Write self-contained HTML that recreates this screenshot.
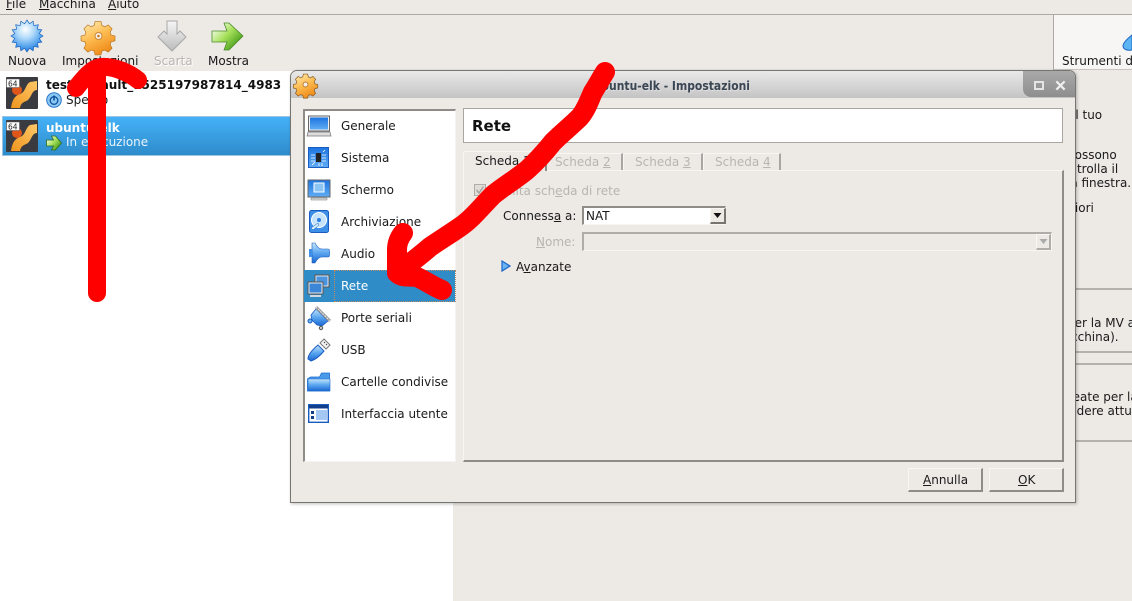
<!DOCTYPE html>
<html><head><meta charset="utf-8">
<style>
html,body{margin:0;padding:0}
body{width:1132px;height:601px;overflow:hidden;position:relative;background:#edeae6;font:12px "DejaVu Sans",sans-serif;color:#1a1a1a}
.t{position:absolute;white-space:nowrap;line-height:14px}
.a{position:absolute}
u{text-decoration:underline}
.g{color:#b8b5b1}
svg{position:absolute;overflow:visible}
</style></head><body>

<svg style="left:0;top:0" width="0" height="0"><defs>
<radialGradient id="n" cx=".45" cy=".3" r=".75"><stop offset="0" stop-color="#fff"/><stop offset=".35" stop-color="#b4dcfb"/><stop offset=".75" stop-color="#4a9cea"/><stop offset="1" stop-color="#1668d0"/></radialGradient>
<linearGradient id="o" x1=".1" y1="0" x2=".6" y2="1"><stop offset="0" stop-color="#ffedb4"/><stop offset=".5" stop-color="#fdbb50"/><stop offset="1" stop-color="#ee8a18"/></linearGradient>
<linearGradient id="s" x1="0" y1="0" x2="0" y2="1"><stop offset="0" stop-color="#f6f6f6"/><stop offset="1" stop-color="#bcbcbc"/></linearGradient>
<linearGradient id="gr" x1="0" y1=".2" x2=".9" y2=".95"><stop offset="0" stop-color="#f6fcf0"/><stop offset=".45" stop-color="#a6e05a"/><stop offset="1" stop-color="#2f8c0a"/></linearGradient>
<linearGradient id="b" x1="0" y1="0" x2="0" y2="1"><stop offset="0" stop-color="#c4e4fb"/><stop offset=".5" stop-color="#5aa6f0"/><stop offset="1" stop-color="#1a66d0"/></linearGradient>
<linearGradient id="bd" x1="0" y1="0" x2="0" y2="1"><stop offset="0" stop-color="#1c74e0"/><stop offset="1" stop-color="#60acf4"/></linearGradient>
<linearGradient id="vm" x1="0" y1="1" x2="1" y2="0"><stop offset="0" stop-color="#f0951e"/><stop offset="1" stop-color="#ffc868"/></linearGradient>
</defs></svg>

<!-- menu -->
<div class="a" style="left:0;top:14px;width:1132px;height:1px;background:#aca9a4"></div>
<div class="t" style="left:6px;top:-3px"><u>F</u>ile</div>
<div class="t" style="left:39px;top:-3px"><u>M</u>acchina</div>
<div class="t" style="left:108px;top:-3px"><u>A</u>iuto</div>

<!-- toolbar icons -->
<svg style="left:11px;top:20px" width="32" height="32" viewBox="-16 -16 32 32"><polygon points="16,0 12.26,2.44 14.8,6.1 10.39,6.94 11.3,11.3 6.94,10.39 6.1,14.8 2.44,12.26 0,16 -2.44,12.26 -6.1,14.8 -6.94,10.39 -11.3,11.3 -10.39,6.94 -14.8,6.1 -12.26,2.44 -16,0 -12.26,-2.44 -14.8,-6.1 -10.39,-6.94 -11.3,-11.3 -6.94,-10.39 -6.1,-14.8 -2.44,-12.26 0,-16 2.44,-12.26 6.1,-14.8 6.94,-10.39 11.3,-11.3 10.39,-6.94 14.8,-6.1 12.26,-2.44" fill="url(#n)" stroke="#1c66c0" stroke-width=".7"/></svg>
<svg style="left:83px;top:20px" width="32" height="32" viewBox="0 0 32 32"><path d="M13 1h6l1 4 3 1.500 3.500-2 4 4-2 3.500 1 3 4 1v5l-4 1-1 3 2 3.500-4 4-3.500-2-3 1-1 4h-6l-1-4-3-1-3.500 2-4-4 2-3.500-1-3-4-1v-5l4-1 1-3-2-3.500 4-4 3.500 2 3-1.500z" transform="translate(-.5 .5) scale(.97)" fill="url(#o)" stroke="#b87420" stroke-width=".7"/><circle cx="15.500" cy="16" r="3.500" fill="#f3efe8" stroke="#c98a3a"/><circle cx="15.500" cy="16" r="1.300" fill="#cc7a20"/></svg>
<svg style="left:157px;top:20px" width="30" height="32" viewBox="0 0 30 32"><path d="M10 1h10v13l3-3 6 6-14 14L1 17l6-6 3 3z" fill="url(#s)" stroke="#a8a8a8"/></svg>
<svg style="left:211px;top:21px" width="33" height="30" viewBox="0 0 33 30"><path d="M1 10h15l-3-8h5l14 13-14 14h-5l3-8H1z" fill="url(#gr)" stroke="#4c8a2a" stroke-width=".8"/></svg>

<div class="t" style="left:8px;top:54px">Nuova</div>
<div class="t" style="left:62px;top:54px">Impostazioni</div>
<div class="t g" style="left:154px;top:54px;text-shadow:1px 1px 0 #fff">Scarta</div>
<div class="t" style="left:208px;top:54px">Mostra</div>

<!-- VM list -->
<div class="a" style="left:0;top:71px;width:453px;height:530px;background:#fff"></div>
<div class="a" style="left:2px;top:116px;width:451px;height:38px;background:linear-gradient(#45b1f7,#2e8ccb);border:1px solid #9cc3df;border-right:0"></div>

<svg style="left:6px;top:77px" width="32" height="32" viewBox="0 0 32 32"><rect width="32" height="32" rx="1" fill="#3a3b40"/><path d="M5 31C6 24 8 19 14 17 20 15 19 8 24 5L31 4V13C26 13 26 19 22 23 19 25 15 25 14 31Z" fill="url(#vm)"/><circle cx="11" cy="13" r="5" fill="#e0561a"/><rect x="0.500" y="2" width="13" height="8.500" fill="#fff" stroke="#555" stroke-width=".5"/><text x="2" y="9.300" font-family="DejaVu Sans" font-size="7.500" fill="#222">64</text></svg>
<svg style="left:6px;top:120px" width="32" height="32" viewBox="0 0 32 32"><rect width="32" height="32" rx="1" fill="#3a3b40"/><path d="M5 31C6 24 8 19 14 17 20 15 19 8 24 5L31 4V13C26 13 26 19 22 23 19 25 15 25 14 31Z" fill="url(#vm)"/><circle cx="11" cy="13" r="5" fill="#e0561a"/><rect x="0.500" y="2" width="13" height="8.500" fill="#fff" stroke="#555" stroke-width=".5"/><text x="2" y="9.300" font-family="DejaVu Sans" font-size="7.500" fill="#222">64</text></svg>

<div class="t" style="left:46px;top:78px;font-weight:bold;color:#111">test_default_1525197987814_4983</div>
<svg style="left:46px;top:92px" width="16" height="16" viewBox="0 0 16 16"><circle cx="8" cy="8" r="7.300" fill="#8cc8f4" stroke="#2a78c8"/><circle cx="8" cy="8.500" r="3.800" fill="none" stroke="#0d4f9a" stroke-width="1.300"/><path d="M8 3.500v5" stroke="#0d4f9a" stroke-width="1.500"/></svg>
<div class="t" style="left:66px;top:93px">Spento</div>
<div class="t" style="left:46px;top:121px;font-weight:bold;color:#fff">ubuntu-elk</div>
<svg style="left:46px;top:135px" width="16" height="16" viewBox="0 0 16 16"><path d="M.5 5h7l-2-4h4l6 7-6 7h-4l2-4h-7z" fill="url(#gr)" stroke="#2c6a20" stroke-width=".8"/></svg>
<div class="t" style="left:66px;top:135px;color:#e8f4fc">In esecuzione</div>

<!-- right side -->
<div class="a" style="left:1053px;top:15px;width:79px;height:54px;background:#f7f6f4;border-left:1px solid #aca9a4;border-bottom:1px solid #c8c5c0"></div>
<svg style="left:1122px;top:34px" width="10" height="18" viewBox="0 0 10 18"><path d="M10 1C5 5 1 9 1 12c0 3 4 5 9 4z" fill="#5db4f4" stroke="#1c66c0"/></svg>
<div class="t" style="left:1062px;top:54px">Strumenti di</div>
<div class="t" style="left:1072px;top:108px">il tuo</div>
<div class="t" style="left:1067px;top:148px">possono</div>
<div class="t" style="left:1062px;top:162px">ontrolla il</div>
<div class="t" style="left:1067px;top:176px">la finestra.</div>
<div class="t" style="left:1070px;top:201px">riori</div>
<div class="t" style="left:1067px;top:316px">per la MV a</div>
<div class="t" style="left:1071px;top:330px">cchina).</div>
<div class="t" style="left:1068px;top:390px">reate per la</div>
<div class="t" style="left:1069px;top:404px">ndere attu</div>
<div class="a" style="left:1076px;top:288px;width:56px;height:2px;background:#b5b2ad"></div>
<div class="a" style="left:1076px;top:351px;width:56px;height:2px;background:#b5b2ad"></div>
<div class="a" style="left:1076px;top:363px;width:56px;height:2px;background:#b5b2ad"></div>
<div class="a" style="left:1076px;top:440px;width:56px;height:2px;background:#b5b2ad"></div>

<!-- dialog -->
<div class="a" style="left:290px;top:70px;width:786px;height:433px;background:#edeae6;border:1px solid #77756f;border-radius:7px 7px 0 0;box-sizing:border-box;box-shadow:1px 1px 3px rgba(0,0,0,.25)"></div>
<div class="a" style="left:291px;top:71px;width:784px;height:27px;background:linear-gradient(#e9e9e9,#c4c4c4);border-radius:6px 6px 0 0"></div>
<div class="a" style="left:1023px;top:71px;width:52px;height:26px;background:linear-gradient(#a9a9a9,#8e8e8e);border-radius:0 6px 0 8px"></div>
<div class="a" style="left:1034px;top:81px;width:6px;height:5px;border:2px solid #e4e4e4"></div>
<svg style="left:1055px;top:80px" width="11" height="11" viewBox="0 0 12 12"><path d="M1.500 1.500l9 9M10.500 1.500l-9 9" stroke="#f0f0f0" stroke-width="2.400"/></svg>
<svg style="left:294px;top:73px" width="23" height="23" viewBox="0 0 32 32"><path d="M13 1h6l1 4 3 1.500 3.500-2 4 4-2 3.500 1 3 4 1v5l-4 1-1 3 2 3.500-4 4-3.500-2-3 1-1 4h-6l-1-4-3-1-3.500 2-4-4 2-3.500-1-3-4-1v-5l4-1 1-3-2-3.500 4-4 3.500 2 3-1.500z" transform="translate(.5 .5) scale(.97)" fill="url(#o)" stroke="#8a5a20"/><circle cx="16" cy="16" r="3.500" fill="#f3efe8" stroke="#a8641a"/></svg>
<div class="t" style="right:382px;top:79px;color:#3a4654;font-family:'DejaVu Sans Condensed','DejaVu Sans',sans-serif;font-stretch:condensed;font-weight:bold;text-shadow:1px 1px 0 #ddd">ubuntu-elk - Impostazioni</div>

<!-- side list -->
<div class="a" style="left:303px;top:109px;width:153px;height:353px;background:#fff;box-sizing:border-box;border:1px solid #f5f4f2;border-top:2px solid #8f8c87;border-left:2px solid #8f8c87"></div>
<div class="a" style="left:304px;top:270px;width:151px;height:32px;background:#308cc6"></div>
<div class="a" style="left:334px;top:270px;width:120px;height:30px;border:1px dotted #c08a60"></div>

<svg style="left:307px;top:115px" width="24" height="22" viewBox="0 0 24 22"><rect x="1.500" y="1" width="21" height="15" fill="#f0f0f0" stroke="#666"/><rect x="3" y="2.500" width="18" height="12" fill="url(#bd)"/><path d="M1 17h22l1 4H0z" fill="#ddd" stroke="#777" stroke-width=".7"/></svg>
<svg style="left:308px;top:147px" width="21" height="21" viewBox="0 0 21 21"><rect x=".5" y=".5" width="20" height="20" fill="url(#bd)" stroke="#1a5cc0"/><rect x="8" y="6" width="5" height="9" fill="#222"/><path d="M3 8h4M3 11h4M3 14h4M14 8h4M14 11h4M14 14h4M4 18l3-3M11 16v3M14 16v3M15 5l2-2" stroke="#fff" stroke-width=".8"/></svg>
<svg style="left:307px;top:179px" width="24" height="22" viewBox="0 0 24 22"><rect x="1" y="1" width="22" height="17" fill="url(#bd)" stroke="#666"/><rect x="7" y="4" width="10" height="9" fill="#8cc4f4" stroke="#fff"/><path d="M4 19h16v2H4z" fill="#ddd" stroke="#777" stroke-width=".5"/></svg>
<svg style="left:309px;top:210px" width="21" height="23" viewBox="0 0 21 23"><rect x=".5" y=".5" width="19" height="22" rx="2" fill="#3d8fe8" stroke="#1a5cc0"/><circle cx="10" cy="10" r="7.500" fill="#c8e4fa" stroke="#fff"/><circle cx="10" cy="10" r="2" fill="#2d7fe0"/><path d="M2 18l7-5 1 2-6 5z" fill="#d8eefc" stroke="#1a5cc0" stroke-width=".5"/></svg>
<svg style="left:309px;top:242px" width="21" height="22" viewBox="0 0 21 22"><path d="M3 1h3C8 5 10 7 13 7h6c1 0 1.500 1 1.500 2v4c0 1-.5 2-1.500 2h-6C10 15 8 17 6 21H3z" fill="url(#b)" stroke="#1a5cc0" stroke-width=".6"/><rect x="0" y="7" width="3" height="8" fill="#3d8fe8"/></svg>
<svg style="left:307px;top:274px" width="24" height="24" viewBox="0 0 24 24"><rect x="8" y="1" width="14" height="12" fill="#dfeaf4" stroke="#555"/><rect x="9.500" y="2.500" width="11" height="9" fill="#4a94e0"/><rect x="1" y="8" width="15" height="12" fill="#dfeaf4" stroke="#555"/><rect x="2.500" y="9.500" width="12" height="9" fill="#3c86d8"/><path d="M3 22h11" stroke="#cfd8e0" stroke-width="2"/></svg>
<svg style="left:307px;top:306px" width="24" height="24" viewBox="0 0 24 24"><path d="M9 3L4 9l1 5 5 5 5 1 6-5z" fill="url(#b)" stroke="#1a5cc0" stroke-width=".8"/><path d="M9 1l14 14" stroke="#999" stroke-width="3"/><path d="M9 1l14 14" stroke="#e8e8e8" stroke-width="1" stroke-dasharray="2 1"/><circle cx="3" cy="15" r="2" fill="#6ab4f2" stroke="#1a5cc0"/><circle cx="14" cy="22" r="1.700" fill="#ccc" stroke="#555"/></svg>
<svg style="left:307px;top:338px" width="24" height="24" viewBox="0 0 24 24"><path d="M1 21c0-4 4-9 10-14l6 6c-5 6-10 9-13 10z" fill="url(#b)" stroke="#1a5cc0"/><path d="M13 5l4-4 6 6-4 4z" fill="#f2f2f2" stroke="#777"/><path d="M17 4l1 1M19 6l1 1" stroke="#444"/></svg>
<svg style="left:307px;top:372px" width="24" height="20" viewBox="0 0 24 20"><path d="M.5 19V7l3-2h9l2-4h8v18z" fill="#4a9aea" stroke="#1a6cd0" stroke-width=".8"/><path d="M1 7h22v12H1z" fill="url(#b)" stroke="#1a6cd0" stroke-width=".6"/></svg>
<svg style="left:308px;top:404px" width="21" height="19" viewBox="0 0 21 19"><rect x=".7" y=".7" width="19.600" height="17.600" fill="#fff" stroke="#1a5cc0" stroke-width="1.400"/><rect x="1" y="1" width="19" height="3.500" fill="#123e8c"/><rect x="3" y="7" width="3" height="3" fill="#123e8c"/><rect x="3" y="12" width="3" height="3" fill="#123e8c"/><rect x="8" y="6" width="11" height="10" fill="#a4c8f4"/></svg>

<div class="t" style="left:341px;top:119px">Generale</div>
<div class="t" style="left:341px;top:151px">Sistema</div>
<div class="t" style="left:341px;top:183px">Schermo</div>
<div class="t" style="left:341px;top:215px">Archiviazione</div>
<div class="t" style="left:341px;top:247px">Audio</div>
<div class="t" style="left:341px;top:279px;color:#fff">Rete</div>
<div class="t" style="left:341px;top:311px">Porte seriali</div>
<div class="t" style="left:341px;top:343px">USB</div>
<div class="t" style="left:341px;top:375px">Cartelle condivise</div>
<div class="t" style="left:341px;top:407px">Interfaccia utente</div>

<!-- header -->
<div class="a" style="left:463px;top:108px;width:600px;height:35px;background:#fff;border:1px solid #a9a6a1;box-sizing:border-box"></div>
<div class="t" style="left:472px;top:117px;font-size:15px;line-height:18px;font-weight:bold;color:#111">Rete</div>

<!-- tab pane -->
<div class="a" style="left:463px;top:170px;width:601px;height:292px;box-sizing:border-box;border:1px solid #f7f6f4;border-right:2px solid #8f8c87;border-bottom:2px solid #8f8c87"></div>
<div class="a" style="left:463px;top:151px;width:84px;height:20px;background:#edeae6;border:1px solid #f7f6f4;border-bottom:0;border-right:2px solid #8f8c87;box-sizing:border-box;border-radius:3px 3px 0 0"></div>
<div class="a" style="left:547px;top:153px;width:76px;height:17px;box-sizing:border-box;border-top:1px solid #f7f6f4;border-right:2px solid #a9a6a1"></div>
<div class="a" style="left:623px;top:153px;width:80px;height:17px;box-sizing:border-box;border:1px solid #f7f6f4;border-bottom:0;border-right:2px solid #a9a6a1"></div>
<div class="a" style="left:703px;top:153px;width:78px;height:17px;box-sizing:border-box;border:1px solid #f7f6f4;border-bottom:0;border-right:2px solid #a9a6a1"></div>
<div class="t" style="left:475px;top:154px">Scheda <u>1</u></div>
<div class="t g" style="left:555px;top:155px">Scheda <u>2</u></div>
<div class="t g" style="left:635px;top:155px">Scheda <u>3</u></div>
<div class="t g" style="left:715px;top:155px">Scheda <u>4</u></div>

<svg style="left:474px;top:184px" width="12" height="12" viewBox="0 0 12 12"><rect x=".5" y=".5" width="11" height="11" fill="#e0ddd9" stroke="#b0ada8"/><path d="M2.500 6l2.500 3 4.500-6.500" fill="none" stroke="#a8a5a0" stroke-width="1.500"/></svg>
<div class="t g" style="left:493px;top:184px">Abilita sc<span>h</span><u>e</u>da di rete</div>

<div class="t" style="left:503px;top:209px">Connes<span>s</span><u>a</u> a:</div>
<div class="a" style="left:582px;top:206px;width:144px;height:19px;background:#fff;box-sizing:border-box;border:1px solid #f7f6f4;border-top:2px solid #8f8c87;border-left:2px solid #8f8c87"></div>
<div class="t" style="left:586px;top:209px">NAT</div>
<div class="a" style="left:710px;top:208px;width:16px;height:16px;background:#edeae6;box-sizing:border-box;border:1px solid #f7f6f4;border-right:2px solid #77756f;border-bottom:2px solid #77756f"></div>
<svg style="left:713px;top:213px" width="9" height="5" viewBox="0 0 9 5"><path d="M.5 0h8L4.500 5z" fill="#111"/></svg>

<div class="t g" style="left:536px;top:235px"><u>N</u>ome:</div>
<div class="a" style="left:582px;top:232px;width:470px;height:19px;background:#edeae6;box-sizing:border-box;border:1px solid #f7f6f4;border-top:2px solid #b0ada8;border-left:2px solid #b0ada8"></div>
<div class="a" style="left:1036px;top:234px;width:15px;height:16px;box-sizing:border-box;border:1px solid #f7f6f4;border-right:2px solid #b0ada8;border-bottom:2px solid #b0ada8"></div>
<svg style="left:1039px;top:239px" width="9" height="5" viewBox="0 0 9 5"><path d="M.5 0h8L4.500 5z" fill="#aaa"/></svg>

<svg style="left:501px;top:260px" width="10" height="12" viewBox="0 0 10 12"><path d="M1 1l8 5-8 5z" fill="#6ab4f2" stroke="#1a66c8" stroke-width="1.200"/></svg>
<div class="t" style="left:516px;top:260px">A<u>v</u>anzate</div>

<!-- buttons -->
<div class="a" style="left:908px;top:468px;width:75px;height:24px;box-sizing:border-box;border:1px solid #f7f6f4;border-right:2px solid #8f8c87;border-bottom:2px solid #8f8c87"></div>
<div class="a" style="left:989px;top:468px;width:75px;height:24px;box-sizing:border-box;border:1px solid #f7f6f4;border-right:2px solid #8f8c87;border-bottom:2px solid #8f8c87"></div>
<div class="t" style="left:923px;top:473px"><u>A</u>nnulla</div>
<div class="t" style="left:1018px;top:473px"><u>O</u>K</div>

<!-- red arrows -->
<svg style="left:0;top:0" width="1132" height="601" viewBox="0 0 1132 601" fill="none" stroke="#fe0000" stroke-linecap="round" stroke-linejoin="round">
<path d="M97 293V72" stroke-width="18"/>
<path d="M76 88C84 78 92 68 101 67 113 66 128 72 138 80" stroke-width="18"/>
<path d="M605 72C600 80 597 86 593 92 589 101 586 110 580 117 571 126 562 133 553 142 545 152 537 161 527 170 516 179 504 186 493 195 482 206 472 219 460 227 450 234 440 240 430 247 423 253 417 258 410 263L397 273" stroke-width="20"/>
<path d="M403 233C399 238 397 244 397 250V272C400 278 408 276 417 277 426 281 434 287 442 290" stroke-width="20"/>
</svg>
</body></html>
